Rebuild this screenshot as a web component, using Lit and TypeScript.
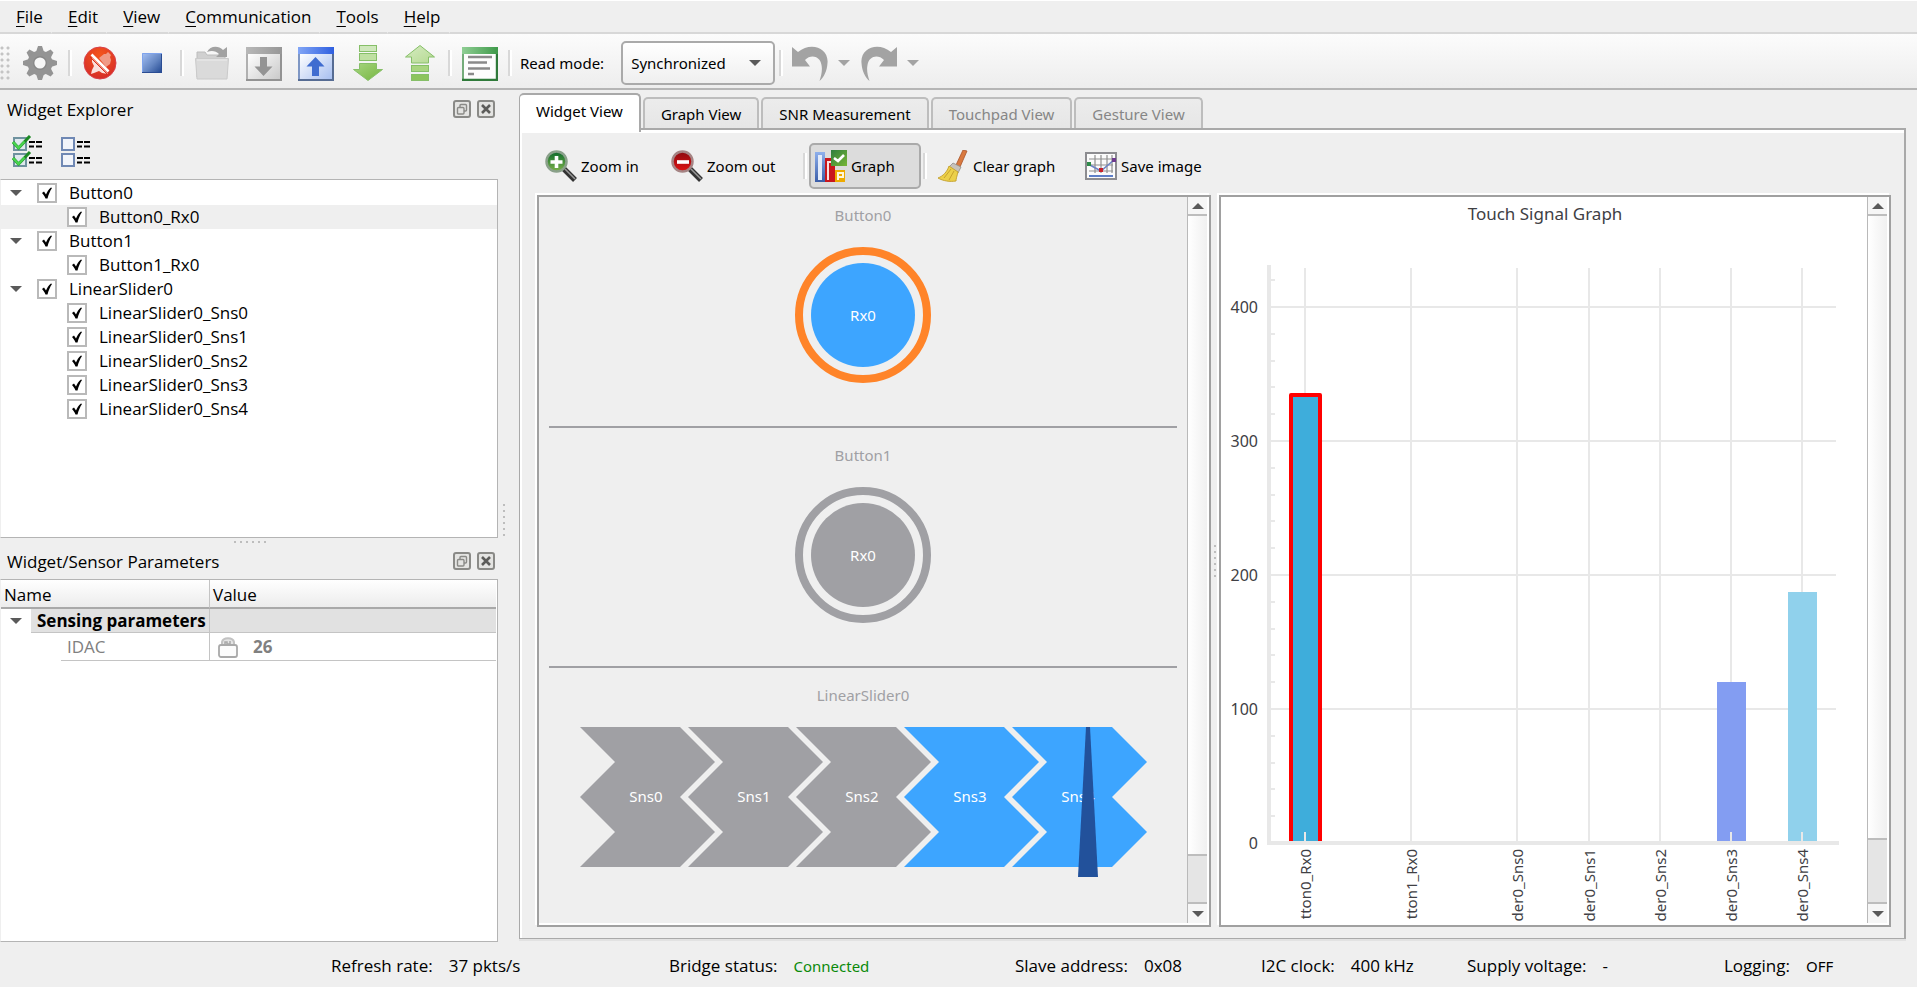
import { LitElement, html, svg, css, nothing } from "lit";
import { customElement } from "lit/decorators.js";
import { classMap } from "lit/directives/class-map.js";

const gear = html`<svg width="36" height="36" viewBox="0 0 36 36">
  ${[0, 45, 90, 135].map((a) => svg`<path transform="rotate(${a} 18 18)" d="M16 1h4l2 6v22l-2 6h-4l-2-6V7z" fill="#949494"/>`)}
  <circle cx="18" cy="18" r="12.500" fill="#949494"/>
  <circle cx="18" cy="18" r="7" fill="#888"/><circle cx="18" cy="18" r="5.600" fill="#f6f6f6"/></svg>`;

const disconnect = html`<svg width="36" height="36" viewBox="0 0 36 36">
  <defs><radialGradient id="r1" cx=".5" cy=".25" r=".8"><stop offset="0" stop-color="#f4551c"/><stop offset="1" stop-color="#d42a28"/></radialGradient></defs>
  <circle cx="18" cy="18" r="16" fill="url(#r1)" stroke="#d9414a"/>
  <path d="M17 13l5-4h2l2-2 3 3-1 2 1 3-1 4-4 3z" fill="#f09a86"/>
  <path d="M10 13l16 16-6-1-3-2-5 2-3 1 1-4 2-4-2-4z" fill="#fbe0dc"/>
  <path d="M9.500 9.500l17 17" stroke="#fff" stroke-width="2.600"/><path d="M8 12l17 17" stroke="#d8301f" stroke-width="1"/></svg>`;

const stop = html`<svg width="36" height="36" viewBox="0 0 36 36">
  <defs><linearGradient id="s1" x1="0" y1="0" x2="1" y2="1"><stop offset="0" stop-color="#a6c2f6"/><stop offset=".55" stop-color="#6486c2"/><stop offset="1" stop-color="#1f458f"/></linearGradient></defs>
  <rect x="8" y="8" width="20" height="20" fill="url(#s1)"/><path d="M8.500 28V8.500H28" fill="none" stroke="#7ea3ec"/><path d="M27.500 9v18.500H8" fill="none" stroke="#2a4c93"/></svg>`;

const folder = html`<svg width="36" height="36" viewBox="0 0 36 36">
  <path d="M3 7h8l2 3h18v22H3z" fill="#d0d0d0" stroke="#bcbcbc"/>
  <path d="M1.500 13.500h33L33 34H3z" fill="#dadada" stroke="#cacaca"/><path d="M3 15h30" stroke="#ebebeb"/>
  <path d="M13 7c3-6 11-7 16-2l4-3v10H22l3-3c-3-3-7-4-12-2z" fill="#a2a2a2"/></svg>`;

const boxed = (dir: "down" | "up") => html`<svg width="36" height="36" viewBox="0 0 36 36">
  <defs><linearGradient id="bx${dir}" x1="0" y1="0" x2="1" y2="1"><stop offset=".1" stop-color="#fff"/><stop offset="1" stop-color=${dir === "up" ? "#a4bdf0" : "#c8c8c8"}/></linearGradient>
  <linearGradient id="bh${dir}"><stop offset="0" stop-color=${dir === "up" ? "#82a6f6" : "#b8b8b8"}/><stop offset="1" stop-color=${dir === "up" ? "#2f5fe0" : "#979797"}/></linearGradient></defs>
  <rect x="1" y="3" width="34" height="32" fill="url(#bx${dir})" stroke=${dir === "up" ? "#7f97c4" : "#b0b0b0"} stroke-width="2"/>
  <rect x="0" y="2" width="36" height="7" fill="url(#bh${dir})"/>
  <path d="M0 35h36M35 9v26" stroke=${dir === "up" ? "#566c93" : "#939393"} stroke-width="2"/>
  ${dir === "up"
    ? svg`<path d="M17.500 12l9 9.500H21V31h-7v-9.500H8.500z" fill="#3f6cd0"/>`
    : svg`<path d="M17.500 31l9-9.500H21V12h-7v9.500H8.500z" fill="#949494"/>`}</svg>`;

const greenArrow = (dir: "down" | "up") => html`<svg width="36" height="36" viewBox="0 0 36 36">
  <defs><linearGradient id="ga${dir}" x1="0" y1="0" x2="1" y2="1"><stop offset="0" stop-color=${dir === "up" ? "#d6ebc2" : "#a6d580"}/><stop offset="1" stop-color=${dir === "up" ? "#b5da92" : "#76b53f"}/></linearGradient></defs>
  ${dir === "down"
    ? svg`<g stroke="#86bf68"><rect x="9.500" y=".5" width="17" height="6" fill="#cfe8bc"/><rect x="9.500" y="8.500" width="17" height="7" fill="#bfe0a2"/>
        <path d="M9.500 18.500h17v6h6L18 35.500 3.500 24.500h6z" fill="url(#gadown)"/></g>`
    : svg`<g stroke="#86bf68"><path d="M18 .5l14.500 11.500h-6v6h-17v-6h-6z" fill="url(#gaup)"/><rect x="9.500" y="20.500" width="17" height="6" fill="#a9d580"/><rect x="9.500" y="29.500" width="17" height="6" fill="#8dc45c"/></g>`}</svg>`;

const logIcon = html`<svg width="36" height="36" viewBox="0 0 36 36">
  <defs><linearGradient id="lh"><stop offset="0" stop-color="#8fce94"/><stop offset="1" stop-color="#3f9a4a"/></linearGradient></defs>
  <rect x="1" y="3" width="34" height="32" fill="#fdfdfd" stroke="#74ac7a" stroke-width="2"/>
  <rect x="0" y="2" width="36" height="7" fill="url(#lh)"/>
  <path d="M0 35h36M35 9v26" stroke="#2f7a3a" stroke-width="2.400"/>
  <path d="M6 12h24M6 17.500h19M6 23.500h22M6 29h6" stroke="#8a8a8a" stroke-width="2.600"/></svg>`;

const turn = (flip: boolean) => html`<svg width="38" height="38" viewBox="0 0 38 38">
  <path transform=${flip ? "translate(38 0) scale(-1 1)" : ""} d="M1 3l6 5C20-3 38 4 36.500 19 36 27 33 33 28.500 37c2-6 3-11 2-16C29 12 20 10 14 16l5 6.500H1z" fill="#a3a3a3"/></svg>`;

const listLines = svg`<path d="M17 6h6m1 0h6M17 10.500h5m2 0h6" stroke="#000" stroke-width="2"/>`;
const checkAll = html`<svg width="32" height="32" viewBox="0 0 32 32">
  ${[1, 17].map((y) => svg`<g transform="translate(0 ${y})"><rect x="2" y="2" width="12" height="12" fill="#dfe9ee" stroke="#6f929f" stroke-width="2"/>
    <path d="M1 6l5.500 6L18 0" fill="none" stroke="#1d8a24" stroke-width="3"/><path d="M1 6l5.500 6 6-6.500" fill="none" stroke="#48d44e" stroke-width="2.400"/>${listLines}</g>`)}</svg>`;
const uncheckAll = html`<svg width="32" height="32" viewBox="0 0 32 32">
  ${[1, 17].map((y) => svg`<g transform="translate(0 ${y})"><rect x="2" y="2" width="12" height="12" fill="#f1f4fa" stroke="#6f88b4" stroke-width="2"/>${listLines}</g>`)}</svg>`;

const magnifier = (plus: boolean) => html`<svg width="32" height="32" viewBox="0 0 32 32">
  <defs><linearGradient id="mg${plus}" x1="0" y1="0" x2="0" y2="1"><stop offset="0" stop-color=${plus ? "#0d6a2c" : "#8c0a10"}/><stop offset="1" stop-color=${plus ? "#7cb24a" : "#e01414"}/></linearGradient></defs>
  <path d="M18 18l12 12" stroke="#333" stroke-width="5.500"/><path d="M20 19l10 10" stroke="#999" stroke-width="1.500"/>
  <circle cx="11.500" cy="11.500" r="10" fill="url(#mg${plus})" stroke=${plus ? "#8aa08a" : "#a58484"} stroke-width="2.500"/>
  <path d=${plus ? "M11.500 6v12M5.500 12h12" : "M6 12h12"} stroke="#fff" stroke-width="3.600"/></svg>`;

const graphIcon = html`<svg width="32" height="32" viewBox="0 0 32 32">
  <defs><linearGradient id="gi1" x1="0" y1="0" x2="0" y2="1"><stop offset="0" stop-color="#8fb0ec"/><stop offset="1" stop-color="#3a5da8"/></linearGradient>
  <linearGradient id="gi2" x1="0" y1="0" x2="1" y2="1"><stop offset="0" stop-color="#2f7d3f"/><stop offset="1" stop-color="#77b635"/></linearGradient></defs>
  <rect x="0" y="2" width="10" height="30" fill="url(#gi1)"/><rect x="3" y="5" width="4" height="25" fill="#e4ecfa"/>
  <rect x="10" y="8" width="10" height="24" fill="#c9161c"/><path d="M13 30V12h5" fill="none" stroke="#fbdede" stroke-width="2"/>
  <rect x="20" y="20" width="10" height="12" fill="#eeaa00"/><path d="M23 30v-7h5v4h-4" fill="none" stroke="#fff7dc" stroke-width="2"/>
  <rect x="16" y="0" width="16" height="16" fill="url(#gi2)"/><path d="M19 8l4 3 6-6" fill="none" stroke="#fff" stroke-width="2.600"/></svg>`;

const broom = html`<svg width="32" height="32" viewBox="0 0 32 32">
  <path d="M26 0l4 1-7 16-4-2z" fill="#d9793f" stroke="#a9562b" stroke-width=".8"/>
  <path d="M16 13l8 4-3 6-9-6z" fill="#c7c2bb" stroke="#8f8b86" stroke-width=".8"/>
  <path d="M12 16l9 6c-1 4-2 7-2 9-6 1-13 0-18-3 5-2 9-6 11-12z" fill="#ecd04a" stroke="#c39f2a" stroke-width=".9"/>
  <path d="M7 28l7-9M12 30l5-9" stroke="#c8a32d"/></svg>`;

const saveIcon = html`<svg width="32" height="30" viewBox="1 0 32 30">
  <rect x="2" y="2" width="30" height="26" fill="#fbfbfb" stroke="#8c8c90" stroke-width="2"/>
  <path d="M5 8h24M5 14h24M5 20h24M11 4v18M17 4v18M23 4v18M28 4v18" stroke="#8f8f8f" stroke-width="1.200"/>
  <path d="M4 13l13 7 14-12" fill="none" stroke="#6d83c4" stroke-width="1.600"/>
  <rect x="3" y="11" width="4" height="4" fill="#2f8b4a"/><rect x="15" y="17" width="4" height="4" fill="#c8202a"/><rect x="28" y="7" width="4" height="4" fill="#6e3b8e"/>
  <path d="M5 25h24" stroke="#5e7fc8" stroke-width="2"/></svg>`;

const lock = html`<svg width="22" height="22" viewBox="0 0 22 22">
  <path d="M5 9V6c1-5 11-5 12 0v3" fill="#e4e4e4" stroke="#c2c2c2" stroke-width="2"/>
  <path d="M8 9V6h2v2h3V5" fill="none" stroke="#a8a8a8" stroke-width="1.500"/>
  <rect x="2" y="9" width="18" height="12" rx="2" fill="#fcfcfc" stroke="#a9a9a9" stroke-width="1.800"/></svg>`;

const floatIcon = html`<svg width="18" height="18" viewBox="0 0 18 18"><rect x="1" y="1" width="16" height="16" rx="2" fill="#e4e4e2" stroke="#8a8a87" stroke-width="2"/>
  <g fill="#e4e4e2" stroke="#8a8a87" stroke-width="1.400"><rect x="7" y="4.500" width="6.500" height="6.500" rx="1"/><rect x="4.500" y="7.500" width="6.500" height="6.500" rx="1"/></g></svg>`;
const closeIcon = html`<svg width="18" height="18" viewBox="0 0 18 18"><rect x="1" y="1" width="16" height="16" rx="2" fill="#e4e4e2" stroke="#8a8a87" stroke-width="2"/>
  <path d="M5 5l8 8M13 5l-8 8" stroke="#5c5c5a" stroke-width="2.600"/></svg>`;

const menus = ["File", "Edit", "View", "Communication", "Tools", "Help"];

const tree = [
  { name: "Button0", sensors: ["Button0_Rx0"] },
  { name: "Button1", sensors: ["Button1_Rx0"] },
  { name: "LinearSlider0", sensors: [0, 1, 2, 3, 4].map((i) => `LinearSlider0_Sns${i}`) },
];
const selected = "Button0_Rx0";

const tabs = [
  { label: "Widget View", active: true },
  { label: "Graph View" },
  { label: "SNR Measurement" },
  { label: "Touchpad View", disabled: true },
  { label: "Gesture View", disabled: true },
];

const status = [
  { label: "Refresh rate:", value: "37 pkts/s" },
  { label: "Bridge status:", value: "Connected", kind: "ok" },
  { label: "Slave address:", value: "0x08" },
  { label: "I2C clock:", value: "400 kHz" },
  { label: "Supply voltage:", value: "-" },
  { label: "Logging:", value: "OFF", kind: "off" },
];

const signals = [
  { name: "Button0_Rx0", x: 84, value: 334, color: "#3eaddb", marked: true },
  { name: "Button1_Rx0", x: 190, value: 0 },
  { name: "LinearSlider0_Sns0", x: 296, value: 0 },
  { name: "LinearSlider0_Sns1", x: 368, value: 0 },
  { name: "LinearSlider0_Sns2", x: 439, value: 0 },
  { name: "LinearSlider0_Sns3", x: 510, value: 120, color: "#839df2" },
  { name: "LinearSlider0_Sns4", x: 581, value: 187, color: "#90d1ec" },
];

@customElement("signal-chart")
class SignalChart extends LitElement {
  static styles = css`
    :host { display: block; flex: 1; min-width: 0; background: #fff; }
    svg { display: block; width: 100%; overflow: visible; }
    text { font-family: "Noto Sans", sans-serif; font-size: 15px; fill: #404044; }
    .title { font-size: 17px; }
    .value { font-size: 16px; }
  `;
  render() {
    const base = 646;
    const y = (v: number) => base - v * 1.34;
    const minor: number[] = [];
    for (let v = 20; v <= 420; v += 20) if (v % 100) minor.push(v);
    // Only the last nine characters of a sensor name fit below the axis.
    const tail = (name: string) => name.slice(-9);
    return html`<svg viewBox="0 0 646 722" role="img" aria-label="Touch Signal Graph">
      <text class="title" x="324" y="23" text-anchor="middle">Touch Signal Graph</text>
      <g stroke="#e8e8e8" stroke-width="2">
        ${[100, 200, 300, 400].map((v) => svg`<path d="M49 ${y(v)}H615"/>`)}
        ${minor.map((v) => svg`<path d="M49 ${Math.round(y(v))}h5"/>`)}
        ${signals.map((s) => svg`<path d="M${s.x} 71V645"/>`)}
      </g>
      ${signals.filter((s) => s.value).map((s) => s.marked
        ? svg`<rect x=${s.x - 14} y=${Math.round(y(s.value))} width="29" height=${Math.round(s.value * 1.34) - 2} fill=${s.color} /><path d="M${s.x - 14} 644V${Math.round(y(s.value))}h29V644" fill="none" stroke="#f00" stroke-width="4" stroke-linejoin="round"/>`
        : svg`<rect x=${s.x - 14} y=${Math.round(y(s.value))} width="29" height=${Math.round(s.value * 1.34) - 2} fill=${s.color} />`)}
      <path d="M48 68V648" stroke="#e8e8e8" stroke-width="4"/><path d="M46 646H618" stroke="#e8e8e8" stroke-width="4"/>
      ${signals.map((s) => svg`<path d="M${s.x} 635v10" stroke="#e8e8e8" stroke-width="2"/>`)}
      ${[0, 100, 200, 300, 400].map((v) => svg`<text class="value" x="37" y=${y(v) + 6} text-anchor="end">${v}</text>`)}
      ${signals.map((s) => svg`<text transform="translate(${s.x + 6} 652) rotate(-90)" text-anchor="end">${tail(s.name)}</text>`)}
    </svg>`;
  }
}

@customElement("app-root")
class AppRoot extends LitElement {
  static styles = css`
    :host { display: flex; flex-direction: column; min-height: 100vh; box-sizing: border-box; background: #efefef; color: #000;
      font-family: "Open Sans", sans-serif; font-size: 17px; line-height: 24px; }
    * { box-sizing: border-box; }
    svg { display: block; flex: none; }
    button { font: inherit; color: inherit; background: none; border: 0; padding: 0; margin: 0; }
    .menu { display: flex; border-top: 1px solid #fff; }
    .menu button { height: 33px; padding: 0 8px 0 16px; border-bottom: 2px solid #d8d8d8; border-right: 1px solid transparent; }
    .menu::after { content: ""; flex: 1; border-bottom: 2px solid #d8d8d8; }
    .menu u { text-decoration-thickness: 1px; text-underline-offset: 3px; }
    .bar { display: flex; align-items: center; height: 56px; padding-top: 3px; background: linear-gradient(#fcfcfc, #ededed); border-bottom: 2px solid #b5b5b5; font-family: "Noto Sans", sans-serif; font-size: 15px; }
    .tool { width: 52px; height: 48px; display: grid; place-items: center; }
    .grip { width: 14px; height: 34px; background: radial-gradient(circle at 2px 2px, #c4c4c4 1px, transparent 2px) 0 0 / 6px 6px; background-clip: content-box; padding-right: 4px; }
    .sep { width: 8px; height: 26px; display: flex; justify-content: center; }
    .sep::before { content: ""; width: 4px; background: linear-gradient(90deg, #d8d8d8 50%, #fff 50%); }
    .mode { padding: 0 17px 0 6px; }
    .combo { position: relative; display: flex; margin-right: 2px; }
    .combo select { appearance: none; width: 154px; height: 44px; font: inherit; color: #000; padding: 0 8px; border: 2px solid #aaa; border-radius: 5px; background: linear-gradient(#fff, #efefef); }
    .tri { width: 0; height: 0; border: 6px solid transparent; border-top-color: #5a5a5a; border-bottom: 0; }
    .combo .tri { position: absolute; right: 14px; top: 19px; pointer-events: none; }
    .undo { display: flex; align-items: center; gap: 9px; padding: 0 4px 0 6px; }
    .undo .tri { border-top-color: #a3a3a3; }
    .body { flex: 1; display: flex; min-height: 0; }
    .docks { width: 498px; flex: none; display: flex; flex-direction: column; padding: 3px 0 45px; margin-bottom: -48px; }
    .dock-title { display: flex; align-items: center; gap: 6px; height: 34px; padding: 0 3px 0 7px; }
    .dock-title button { padding-bottom: 3px; }
    .dock-title h2 { font: inherit; margin: 0; flex: 1; }
    .tree-tools { display: flex; align-items: flex-start; gap: 16px; padding: 8px 12px 0; height: 52px; }
    .tree { height: 359px; margin: 0; padding: 1px 0 0; list-style: none; background: #fff; border: 1px solid #b4b4b4; border-left-color: #efefef; }
    .tree ul { list-style: none; margin: 0; padding: 0; }
    .row { display: flex; align-items: center; height: 24px; padding-left: 9px; }
    .row.child { padding-left: 66px; }
    .row.sel { background: #efefef; }
    .row .tri { margin-right: 15px; }
    .row label { display: flex; align-items: center; gap: 12px; }
    input[type="checkbox"] { appearance: none; margin: 0; width: 20px; height: 20px; border: 2px solid #b9b9b9; background: #fff; }
    input[type="checkbox"]:checked { background: #fff url("data:image/svg+xml,%3Csvg xmlns='http://www.w3.org/2000/svg' viewBox='0 0 16 16'%3E%3Cpath d='M3 8l2-1.500 2 3C8 7 9.500 4.500 12 2.500l1 .5c-2 3-3.500 6.500-4.500 10.500H6.500C5.500 11 4.500 9.500 3 8z'/%3E%3C/svg%3E") center / 16px 16px no-repeat; }
    .hsplit { height: 7px; display: flex; justify-content: center; align-items: center; padding-left: 4px; }
    .hsplit i { width: 34px; height: 2px; background: repeating-linear-gradient(90deg, #bdbdbd 0 2px, transparent 2px 6px); }
    .vsplit { width: 21px; flex: none; display: flex; align-items: center; padding: 10px 0 0 5px; }
    .vsplit i, .mid i { width: 2px; height: 32px; background: repeating-linear-gradient(#bdbdbd 0 2px, transparent 2px 6px); }
    .params { flex: 1; background: #fff; border: 1px solid #b4b4b4; border-left-color: #efefef; padding: 0 1px 0 0; }
    table { width: 100%; border-collapse: separate; border-spacing: 0; table-layout: fixed; }
    th, td { padding: 0; text-align: left; font-weight: 400; }
    thead th { height: 28px; background: linear-gradient(#fff, #ececec); border-bottom: 2px solid #a9a9a9; padding: 3px 0 0 3px; }
    .c1 { width: 209px; }
    .c1, .n { border-right: 1px solid #c4c4c4; }
    .cell { display: flex; align-items: center; height: 24px; border-bottom: 1px solid #c4c4c4; }
    .group .cell { background: #e1e1e1; }
    .group .n .cell { margin-left: 30px; padding-left: 6px; font-weight: 700; white-space: nowrap; }
    .group .n { position: relative; }
    .group .tri { position: absolute; left: 9px; top: 9px; }
    .item .cell { height: 28px; color: #808080; }
    .item .n .cell { margin-left: 60px; padding-left: 6px; }
    .item .v { gap: 14px; padding-left: 7px; font-weight: 700; }
    .main { flex: 1; min-width: 0; margin: 3px 11px 0 0; display: flex; flex-direction: column; font-family: "Noto Sans", sans-serif; font-size: 15px; }
    .tabs { display: flex; align-items: flex-end; height: 35px; gap: 2px; }
    .tabs button { height: 31px; padding: 0 16px; background: linear-gradient(#ececec, #e6e6e6); border: 2px solid #bdbdbd; border-bottom: 0; border-radius: 5px 5px 0 0; white-space: nowrap; }
    .tabs button[disabled] { color: #868686; }
    .tabs .active { height: 39px; margin-bottom: -4px; padding: 0 16px 5px; background: #fff; border-color: #a9a9a9; border-left-width: 1px; z-index: 1; }
    .page { flex: 1; border: 2px solid #a9a9a9; border-width: 2px 2px 1px 1px; box-shadow: inset 2px 3px 0 #fff, 0 2px 0 #e2e2e2; display: flex; flex-direction: column; padding: 13px 13px 11px 17px; }
    .actions { display: flex; align-items: center; height: 46px; margin-bottom: 6px; padding-left: 8px; }
    .actions button { display: flex; align-items: center; gap: 4px; height: 46px; white-space: nowrap; }
    .actions .on { width: 112px; border: 2px solid #aaa; border-radius: 5px; background: #dcdcdc; padding-left: 4px; }
    .zin { width: 126px; } .zout { width: 130px; } .clr { margin-left: 8px; width: 148px; }
    .views { flex: 1; display: grid; grid-template-columns: 674fr 8px 672fr; }
    .mid { display: flex; align-items: center; justify-content: center; }
    .pane { display: flex; min-width: 0; border: 2px solid #a0a0a0; box-shadow: -2px -2px 0 #fff, inset -2px -2px 0 #fff; padding: 0 2px 2px 0; }
    .widgets { flex: 1; min-width: 0; }
    .widgets section { height: 229px; padding-top: 6px; display: flex; flex-direction: column; align-items: center; gap: 20px; color: #a0a0a4; }
    hr { border: 0; height: 2px; background: #a0a0a4; margin: 0 10px 9px; }
    h3 { margin: 0; font: inherit; }
    .ring { width: 136px; height: 136px; border-radius: 50%; border: 8px solid #a0a0a4; padding: 8px; display: grid; }
    .ring span { border-radius: 50%; background: #a0a0a4; color: #fff; display: grid; place-items: center; }
    .ring.touch { border-color: #ff8429; }
    .ring.touch span { background: #3da5ff; }
    .slider text { fill: #fff; }
    .scroll { width: 20px; flex: none; border-left: 1px solid #b9b9b9; display: flex; flex-direction: column; background: linear-gradient(90deg, #fff, #f0f0f0); }
    .scroll button { height: 19px; display: grid; place-items: center; background: #f6f6f6; }
    .scroll .up { border-bottom: 2px solid #bdbdbd; }
    .scroll .up .tri { transform: rotate(180deg); }
    .track { flex: 1; display: flex; align-items: flex-end; }
    .thumb { width: 100%; background: #e5e5e5; border-top: 2px solid #bdbdbd; border-bottom: 2px solid #bdbdbd; height: 50px; }
    .thumb.long { height: 66px; }
    .status { height: 48px; padding: 5px 0 0 331px; display: grid; grid-template-columns: 338fr 346fr 246fr 206fr 257fr 193fr; align-items: center; white-space: nowrap; pointer-events: none; }
    .status div { display: flex; gap: 16px; }
    .ok, .off { font-family: "Noto Sans", sans-serif; font-size: 15px; }
    .ok { color: #0a8a0a; }
  `;

  private row(name: string, child: boolean) {
    return html`<div class=${classMap({ row: true, child, sel: name === selected })}>
      ${child ? nothing : html`<i class="tri"></i>`}
      <label><input type="checkbox" checked />${name}</label></div>`;
  }

  private dockTitle(text: string) {
    return html`<header class="dock-title"><h2>${text}</h2><button aria-label="Float">${floatIcon}</button><button aria-label="Close">${closeIcon}</button></header>`;
  }

  private scrollbar(long: boolean) {
    return html`<div class="scroll"><button class="up" aria-label="Scroll up"><i class="tri"></i></button>
      <div class="track"><div class=${classMap({ thumb: true, long })}></div></div>
      <button aria-label="Scroll down"><i class="tri"></i></button></div>`;
  }

  private slider() {
    return html`<svg class="slider" width="567" height="152" viewBox="0 0 567 152">
      ${[0, 1, 2, 3, 4].map((i) => svg`<g transform="translate(${i * 108} 0)">
        <path d="M0 0H100L135 35L100 70L135 105L100 140H0L35 105L0 70L35 35Z" fill=${i < 3 ? "#a0a0a4" : "#3da5ff"}/>
        <text x="66" y="75" text-anchor="middle">Sns${i}</text></g>`)}
      <path d="M506 0h4l8 150h-20z" fill="#22519b"/></svg>`;
  }

  render() {
    return html`
      <nav class="menu">${menus.map((m) => html`<button><u>${m[0]}</u>${m.slice(1)}</button>`)}</nav>
      <div class="bar">
        <span class="grip"></span>
        <button class="tool" aria-label="Configuration">${gear}</button><span class="sep"></span>
        <button class="tool" aria-label="Disconnect">${disconnect}</button>
        <button class="tool" aria-label="Stop">${stop}</button><span class="sep"></span>
        <button class="tool" aria-label="Open">${folder}</button>
        <button class="tool" aria-label="Import">${boxed("down")}</button>
        <button class="tool" aria-label="Export">${boxed("up")}</button>
        <button class="tool" aria-label="Read from device">${greenArrow("down")}</button>
        <button class="tool" aria-label="Write to device">${greenArrow("up")}</button><span class="sep"></span>
        <button class="tool" aria-label="Log">${logIcon}</button><span class="sep"></span>
        <label class="mode" for="mode">Read mode:</label>
        <span class="combo"><select id="mode"><option>Synchronized</option></select><i class="tri"></i></span>
        <span class="sep"></span>
        <button class="undo" aria-label="Undo">${turn(false)}<i class="tri"></i></button>
        <button class="undo" aria-label="Redo">${turn(true)}<i class="tri"></i></button>
      </div>
      <div class="body">
        <aside class="docks">
          ${this.dockTitle("Widget Explorer")}
          <div class="tree-tools"><button aria-label="Check all">${checkAll}</button><button aria-label="Uncheck all">${uncheckAll}</button></div>
          <ul class="tree">${tree.map((w) => html`<li>${this.row(w.name, false)}
            <ul>${w.sensors.map((s) => html`<li>${this.row(s, true)}</li>`)}</ul></li>`)}</ul>
          <div class="hsplit"><i></i></div>
          ${this.dockTitle("Widget/Sensor Parameters")}
          <div class="params"><table>
            <thead><tr><th class="c1">Name</th><th>Value</th></tr></thead>
            <tbody>
              <tr class="group"><td class="n"><i class="tri"></i><div class="cell">Sensing parameters</div></td><td><div class="cell"></div></td></tr>
              <tr class="item"><td class="n"><div class="cell">IDAC</div></td><td><div class="cell v">${lock}26</div></td></tr>
            </tbody></table></div>
        </aside>
        <div class="vsplit"><i></i></div>
        <main class="main">
          <div class="tabs" role="tablist">${tabs.map((t) => html`<button role="tab" class=${classMap({ active: !!t.active })} ?disabled=${t.disabled}>${t.label}</button>`)}</div>
          <div class="page">
            <div class="actions">
              <button class="zin">${magnifier(true)}Zoom in</button>
              <button class="zout">${magnifier(false)}Zoom out</button>
              <span class="sep"></span>
              <button class="on">${graphIcon}Graph</button>
              <span class="sep"></span>
              <button class="clr">${broom}Clear graph</button>
              <button>${saveIcon}Save image</button>
            </div>
            <div class="views">
              <div class="pane">
                <div class="widgets">
                  <section><h3>Button0</h3><div class="ring touch"><span>Rx0</span></div></section><hr />
                  <section><h3>Button1</h3><div class="ring"><span>Rx0</span></div></section><hr />
                  <section><h3>LinearSlider0</h3>${this.slider()}</section>
                </div>
                ${this.scrollbar(false)}
              </div>
              <div class="mid"><i></i></div>
              <div class="pane"><signal-chart></signal-chart>${this.scrollbar(true)}</div>
            </div>
          </div>
        </main>
      </div>
      <footer class="status">${status.map((s) => html`<div><span>${s.label}</span><span class=${s.kind ?? ""}>${s.value}</span></div>`)}</footer>
    `;
  }
}
